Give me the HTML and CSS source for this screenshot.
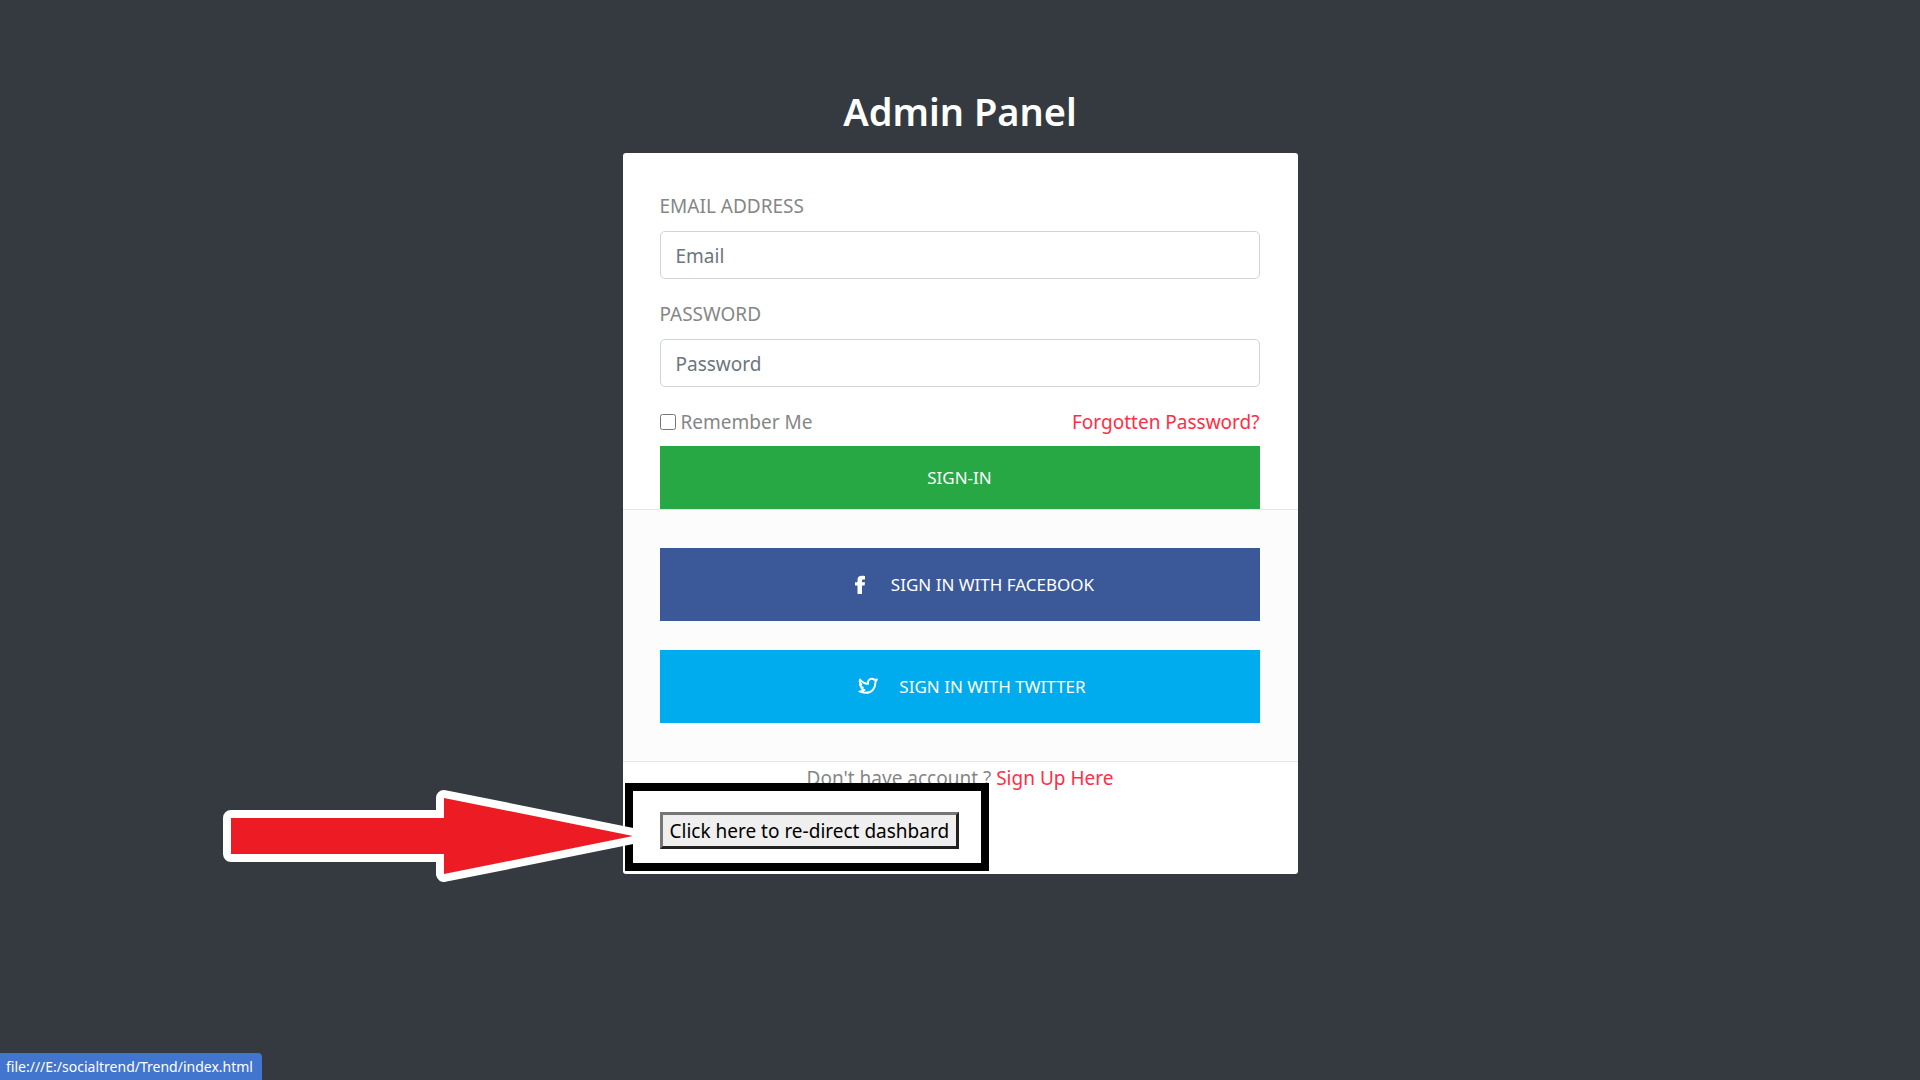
FILE: index.html
```html
<!DOCTYPE html>
<html lang="en">
<head>
  <meta charset="utf-8">
  <meta name="viewport" content="width=device-width, initial-scale=1">
  <title>Admin Panel</title>
  <link rel="stylesheet" href="styles.css">
</head>
<body>
  <main class="login">
    <h1 class="login-title">Admin Panel</h1>
    <form class="card">
      <div class="fields">
        <div class="field">
          <label for="email">Email address</label>
          <input id="email" class="text-input" type="email" placeholder="Email">
        </div>
        <div class="field">
          <label for="password">Password</label>
          <input id="password" class="text-input" type="password" placeholder="Password">
        </div>
        <div class="options">
          <label class="remember"><input type="checkbox" class="tick"> Remember Me</label>
          <a href="#forgot">Forgotten Password?</a>
        </div>
        <button type="submit" class="btn btn-signin">Sign-in</button>
      </div>
      <div class="social">
        <button type="button" class="btn btn-social btn-facebook">
          <svg class="icon" viewBox="0 0 20 20" aria-hidden="true"><path d="M15 1v3.400h-1.600c-1.100 0-1.400.5-1.400 1.400v1.400h3l-.4 3.400H12V19H7.500v-8.400H5V7.200h2.500V5c0-2.800 1.600-4.200 4.300-4.200 1.400 0 2.600.1 3.200.2z" fill="currentColor"/></svg>Sign in with facebook
        </button>
        <button type="button" class="btn btn-social btn-twitter">
          <svg class="icon" viewBox="0 0 20 20" aria-hidden="true"><path d="M2 2.600c2 2.500 4.600 4 8 4.300-.4-3 1.300-5.100 3.700-5.100 1.200 0 2.100.5 2.700 1.100l2.500-.5-1.500 2.500c.2 6.500-3.700 10.900-9.600 10.900-2.400 0-4.500-.4-6.300-1.300 2.200 0 3.800-.5 5-1.500-1.700-.2-2.800-1.100-3.200-2.300h1.500C3 9.900 2 8.600 2 7l1.300.4C1.900 6.200 1.400 4.300 2 2.600z" fill="none" stroke="currentColor" stroke-width="1.900" stroke-linejoin="round"/></svg>Sign in with Twitter
        </button>
      </div>
      <p class="signup">Don't have account ? <a href="#signup">Sign Up Here</a></p>
      <div class="redirect">
        <span class="highlight"></span>
        <svg class="arrow" viewBox="0 0 420 100" aria-hidden="true"><path d="M8 32H221V12L410 50L221 88V68H8Z"/></svg>
        <button type="button" class="redirect-btn">Click here to re-direct dashbard</button>
      </div>
    </form>
  </main>
  <div class="status">file:///E:/socialtrend/Trend/index.html</div>
</body>
</html>
```
FILE: styles.css
```css
* {
  box-sizing: border-box;
}

body {
  margin: 0;
  min-height: 100vh;
  background: #343a40;
  color: #868686;
  font: 19px/30px "Noto Sans", "Open Sans", sans-serif;
}

a {
  color: #ff2e44;
  text-decoration: none;
}

.login {
  max-width: 675px;
  margin: 0 auto;
  padding: 86px 0 40px;
}

.login-title {
  margin: 0 0 17px;
  color: #fff;
  font-size: 38px;
  font-weight: 600;
  line-height: 50px;
  text-align: center;
}

.card {
  padding-bottom: 25px;
  background: #fff;
  border-radius: 3px;
}

.fields {
  padding: 38px 38px 0 37px;
}

.field {
  display: flex;
  flex-direction: column;
  gap: 10px;
  margin-bottom: 20px;
}

.field label {
  text-transform: uppercase;
}

.text-input {
  width: 100%;
  height: 48px;
  padding: 2px 15px 0;
  border: 1px solid #ced4da;
  border-radius: 5px;
  background: #fff;
  color: #495057;
  font: inherit;
}

.text-input::placeholder {
  color: #6c757d;
}

.options {
  display: flex;
  justify-content: space-between;
  margin-bottom: 9px;
}

.remember {
  display: flex;
  align-items: center;
  gap: 5px;
}

.tick {
  width: 16px;
  height: 16px;
  margin: 0;
}

.btn {
  display: flex;
  align-items: center;
  justify-content: center;
  width: 100%;
  padding: 0;
  border: 0;
  color: #fff;
  font: inherit;
  font-size: 17px;
  text-transform: uppercase;
}

.btn-signin {
  height: 63px;
  background: #28a745;
}

.social {
  display: grid;
  gap: 29px;
  padding: 38px 38px 38px 37px;
  border-top: 1px solid #e7e7e7;
  border-bottom: 1px solid #e7e7e7;
  background: #fcfcfc;
}

.btn-social {
  height: 73px;
}

.btn-facebook {
  background: #3b5998;
}

.btn-twitter {
  background: #00aced;
}

.icon {
  width: 20px;
  height: 20px;
  margin: 0 21px 0 25px;
}

.signup {
  margin: 0 0 18px;
  line-height: 32px;
  text-align: center;
}

.redirect {
  position: relative;
  width: fit-content;
  margin-left: 37px;
}

/* Callout frame and arrow laid over the card */
.highlight {
  position: absolute;
  inset: -29px -30px -22px -35px;
  border: 8px solid #000;
  background: #fff;
}

.arrow {
  position: absolute;
  top: -26px;
  right: calc(100% + 17px);
  width: 420px;
  height: 100px;
  overflow: visible;
  pointer-events: none;
}

.arrow path {
  fill: #ed1c24;
  stroke: #fff;
  stroke-width: 16px;
  stroke-linejoin: round;
  paint-order: stroke;
}

.redirect-btn {
  position: relative;
  display: block;
  padding: 1px 7px 0;
  border: 3px solid;
  border-color: #767676 #212121 #212121 #767676;
  background: #efefef;
  color: #000;
  font: inherit;
}

.status {
  position: fixed;
  left: 0;
  bottom: 0;
  padding: 0 9px 0 6px;
  border-top-right-radius: 4px;
  background: #4275cd;
  color: #fff;
  font-size: 14px;
  line-height: 27px;
}
```
